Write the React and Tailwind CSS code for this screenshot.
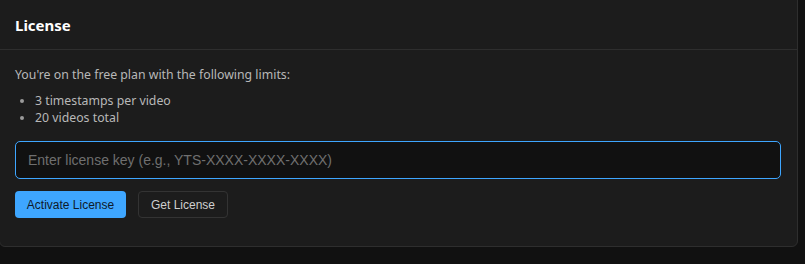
import React, { useState } from "react";

export default function App() {
  const [key, setKey] = useState("");

  return (
    <div className="min-h-[264px] w-[805px] overflow-hidden bg-[#111111] font-['Noto_Sans',sans-serif]">
      <div className="-ml-px -mt-2 w-[799px] rounded-md border border-[#2e2e2e] bg-[#1c1c1c]">
        <div className="flex h-[57px] items-center border-b border-[#2e2e2e] px-[15px] pt-2">
          <h2 className="text-[15px] font-bold text-white">License</h2>
        </div>
        <div className="px-[15px] pt-[16px] pb-[28px]">
          <p className="text-[12.3px] leading-[17px] text-[#b8b8b8]">
            You're on the free plan with the following limits:
          </p>
          <ul className="mt-[9px] list-disc pl-[20px] text-[12.3px] leading-[17px] text-[#b8b8b8] marker:text-[#9a9a9a]">
            <li>3 timestamps per video</li>
            <li>20 videos total</li>
          </ul>
          <input
            value={key}
            onChange={(e) => setKey(e.target.value)}
            placeholder="Enter license key (e.g., YTS-XXXX-XXXX-XXXX)"
            className="mt-[15px] h-[38px] w-[766px] rounded-[5px] border border-[#3ea6ff] bg-[#111111] px-[12px] font-['Liberation_Sans',Arial,sans-serif] text-[14px] text-white outline-none placeholder:text-[#6f6f6f]"
          />
          <div className="mt-[12px] flex gap-[12px] font-['Liberation_Sans',Arial,sans-serif] text-[12px]">
            <button className="h-[27px] w-[111px] rounded-[4px] bg-[#3ea6ff] text-[#0f1a2a]">
              Activate License
            </button>
            <button className="h-[27px] w-[90px] rounded-[4px] border border-[#333333] bg-transparent text-[#cfcfcf]">
              Get License
            </button>
          </div>
        </div>
      </div>
    </div>
  );
}
